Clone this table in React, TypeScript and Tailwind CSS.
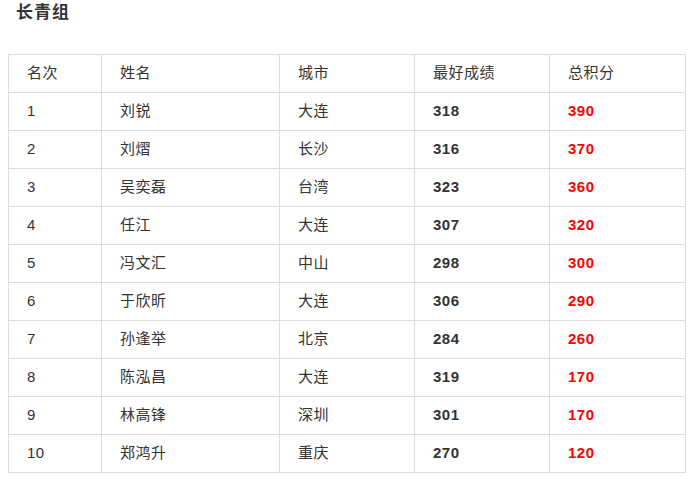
const paiming = [
  { mingci: 1, xingming: '刘锐', chengshi: '大连', zuihao: 318, zongjifen: 390 },
  { mingci: 2, xingming: '刘熠', chengshi: '长沙', zuihao: 316, zongjifen: 370 },
  { mingci: 3, xingming: '吴奕磊', chengshi: '台湾', zuihao: 323, zongjifen: 360 },
  { mingci: 4, xingming: '任江', chengshi: '大连', zuihao: 307, zongjifen: 320 },
  { mingci: 5, xingming: '冯文汇', chengshi: '中山', zuihao: 298, zongjifen: 300 },
  { mingci: 6, xingming: '于欣昕', chengshi: '大连', zuihao: 306, zongjifen: 290 },
  { mingci: 7, xingming: '孙逢举', chengshi: '北京', zuihao: 284, zongjifen: 260 },
  { mingci: 8, xingming: '陈泓昌', chengshi: '大连', zuihao: 319, zongjifen: 170 },
  { mingci: 9, xingming: '林高锋', chengshi: '深圳', zuihao: 301, zongjifen: 170 },
  { mingci: 10, xingming: '郑鸿升', chengshi: '重庆', zuihao: 270, zongjifen: 120 },
]

const biaotou = ['名次', '姓名', '城市', '最好成绩', '总积分']

function App() {
  return (
    <div className="bg-white text-[#333] font-['Liberation_Sans','Noto_Sans_CJK_SC',sans-serif] min-h-[479px]">
      <h2 className="pl-4 pt-[1px] text-[17px] leading-[24px] font-bold tracking-[1px]">长青组</h2>
      <div className="px-2 pt-[29px]">
        <table className="w-[678px] border-collapse table-fixed text-[15px] tracking-[0.5px]">
          <colgroup>
            <col className="w-[93px]" />
            <col className="w-[178px]" />
            <col className="w-[135px]" />
            <col className="w-[135px]" />
            <col className="w-[136px]" />
          </colgroup>
          <thead>
            <tr className="h-[38px]">
              {biaotou.map((t) => (
                <th key={t} className="border border-[#ddd] px-[18px] text-left font-normal">
                  {t}
                </th>
              ))}
            </tr>
          </thead>
          <tbody>
            {paiming.map((p) => (
              <tr key={p.mingci} className="h-[38px]">
                <td className="border border-[#ddd] px-[18px]">{p.mingci}</td>
                <td className="border border-[#ddd] px-[18px]">{p.xingming}</td>
                <td className="border border-[#ddd] px-[18px]">{p.chengshi}</td>
                <td className="border border-[#ddd] px-[18px] font-bold">{p.zuihao}</td>
                <td className="border border-[#ddd] px-[18px] font-bold text-[#f00]">{p.zongjifen}</td>
              </tr>
            ))}
          </tbody>
        </table>
      </div>
    </div>
  )
}

export default App
